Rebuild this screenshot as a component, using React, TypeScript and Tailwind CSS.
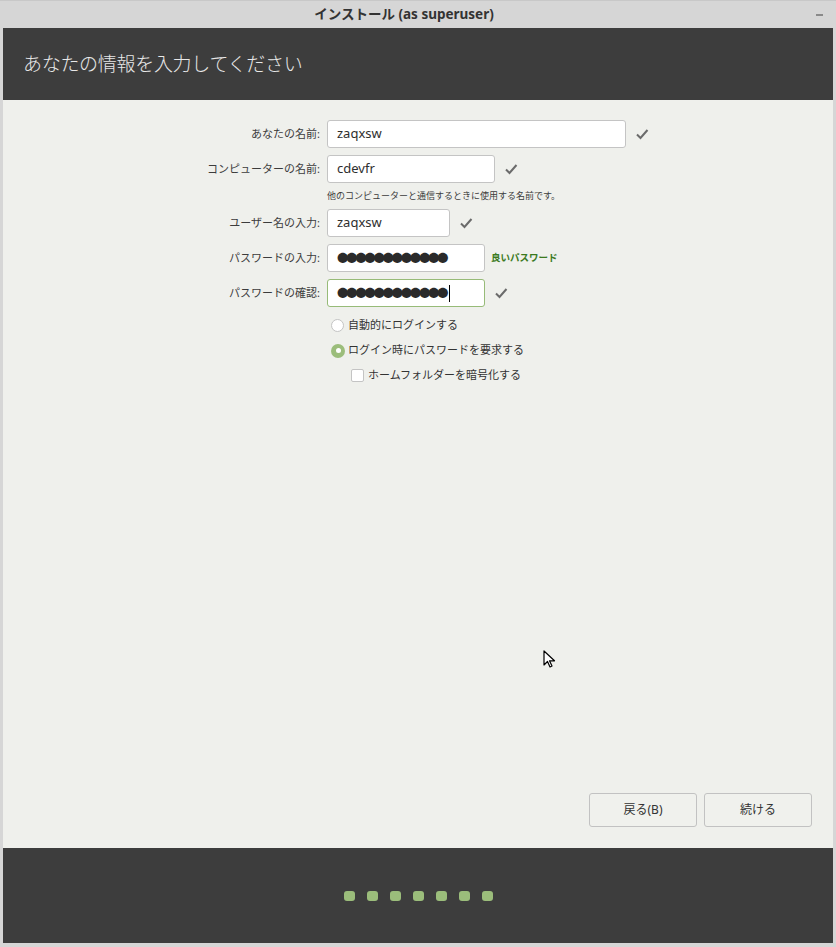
import React from "react";

const font = { fontFamily: '"Noto Sans", "Noto Sans CJK JP", sans-serif' };

function Check() {
    return (
        <svg width="14" height="12" viewBox="0 0 14 12" className="ml-[9px] shrink-0">
            <path d="M2 6.5 L5.5 10 L12.5 2" fill="none" stroke="#6b6b6b" strokeWidth="2" />
        </svg>
    );
}

function Row({ label, value, width, ok = false, green = false, caret = false, extra }: {
    label: string; value: string; width: string; ok?: boolean; green?: boolean; caret?: boolean; extra?: React.ReactNode;
}) {
    const dots = value.startsWith("●");
    return (
        <div className="flex items-center h-[28px]">
            <span className="w-[318px] text-right text-[11px] text-[#3c3c3c] pr-[1px]">{label}</span>
            <div className={`ml-[6px] h-[28px] ${width} bg-white rounded-[3px] border ${green ? "border-[#97bb78]" : "border-[#c4c4c4]"} flex items-center px-[9px] text-[13px] text-[#2e2e2e]`}>
                <span className={dots ? "text-[11.5px] tracking-[-2.4px] text-[#2a2a2a]" : ""}>{value}</span>
                {caret && <span className="w-[1px] h-[17px] bg-black ml-[3px]" />}
            </div>
            {ok && <Check />}
            {extra}
        </div>
    );
}

export default function App() {
    return (
        <div className="w-[836px] h-[947px] bg-[#d6d6d6] flex flex-col" style={font}>
            <div className="h-[28px] shrink-0 flex items-center justify-center relative border-t border-[#c8c8c8] pr-[28px]">
                <span className="text-[13.5px] font-bold text-[#333]">インストール (as superuser)</span>
                <span className="absolute right-[13px] top-[13px] w-[7px] h-[2px] bg-[#8a8a8a]" />
            </div>
            <div className="flex-1 flex flex-col mx-[3px] mb-[4px]">
                <div className="h-[72px] shrink-0 bg-[#3d3d3d] flex items-center pl-[20px]">
                    <h1 className="text-[19px] text-[#e8e8e8] font-light tracking-[-0.3px]">あなたの情報を入力してください</h1>
                </div>
                <div className="flex-1 bg-[#eff0ec] flex flex-col pt-[20px] relative">
                    <div className="flex flex-col gap-[7px]">
                        <Row label="あなたの名前:" value="zaqxsw" width="w-[299px]" ok />
                        <Row label="コンピューターの名前:" value="cdevfr" width="w-[168px]" ok />
                    </div>
                    <div className="h-[26px] flex items-center pl-[324px] text-[9px] text-[#3c3c3c]">
                        他のコンピューターと通信するときに使用する名前です。
                    </div>
                    <div className="flex flex-col gap-[7px]">
                        <Row label="ユーザー名の入力:" value="zaqxsw" width="w-[123px]" ok />
                        <Row label="パスワードの入力:" value="●●●●●●●●●●●●" width="w-[158px]"
                            extra={<span className="ml-[6px] text-[9.5px] font-bold text-[#3b7a1e]">良いパスワード</span>} />
                        <Row label="パスワードの確認:" value="●●●●●●●●●●●●" width="w-[158px]" green caret ok />
                    </div>
                    <div className="flex flex-col pl-[328px] mt-[6px] text-[11px] text-[#333]">
                        <label className="h-[25px] flex items-center gap-[4px]">
                            <span className="w-[13px] h-[13px] rounded-full bg-white border border-[#c4c4c4]" />
                            自動的にログインする
                        </label>
                        <label className="h-[25px] flex items-center gap-[3px]">
                            <span className="w-[14px] h-[14px] rounded-full bg-[#9bbd7b] flex items-center justify-center">
                                <span className="w-[5px] h-[5px] rounded-full bg-white" />
                            </span>
                            ログイン時にパスワードを要求する
                        </label>
                        <label className="h-[25px] flex items-center gap-[4px] pl-[20px]">
                            <span className="w-[13px] h-[13px] rounded-[2px] bg-white border border-[#c4c4c4]" />
                            ホームフォルダーを暗号化する
                        </label>
                    </div>
                    <div className="flex-1" />
                    <div className="flex justify-end gap-[7px] pr-[21px] pb-[21px]">
                        <button className="w-[108px] h-[34px] rounded-[3px] border border-[#c2c2c2] bg-[#f0f1ed] text-[12px] text-[#333]">戻る(B)</button>
                        <button className="w-[108px] h-[34px] rounded-[3px] border border-[#c2c2c2] bg-[#f0f1ed] text-[12px] text-[#333]">続ける</button>
                    </div>
                    <svg className="absolute left-[540px] top-[550px]" width="14" height="20" viewBox="0 0 14 20">
                        <path d="M1 1 L1 15 L4.5 11.5 L7 17 L9 16 L6.5 10.8 L11.5 10.8 Z" fill="#fff" stroke="#000" strokeWidth="1.2" strokeLinejoin="round" />
                    </svg>
                </div>
                <div className="h-[95px] shrink-0 bg-[#3d3d3d] flex items-center justify-center gap-[12px]">
                    {[0, 1, 2, 3, 4, 5, 6].map((i) => (
                        <span key={i} className="w-[11px] h-[10px] rounded-[3px] bg-[#9bbd7b]" />
                    ))}
                </div>
            </div>
        </div>
    );
}
